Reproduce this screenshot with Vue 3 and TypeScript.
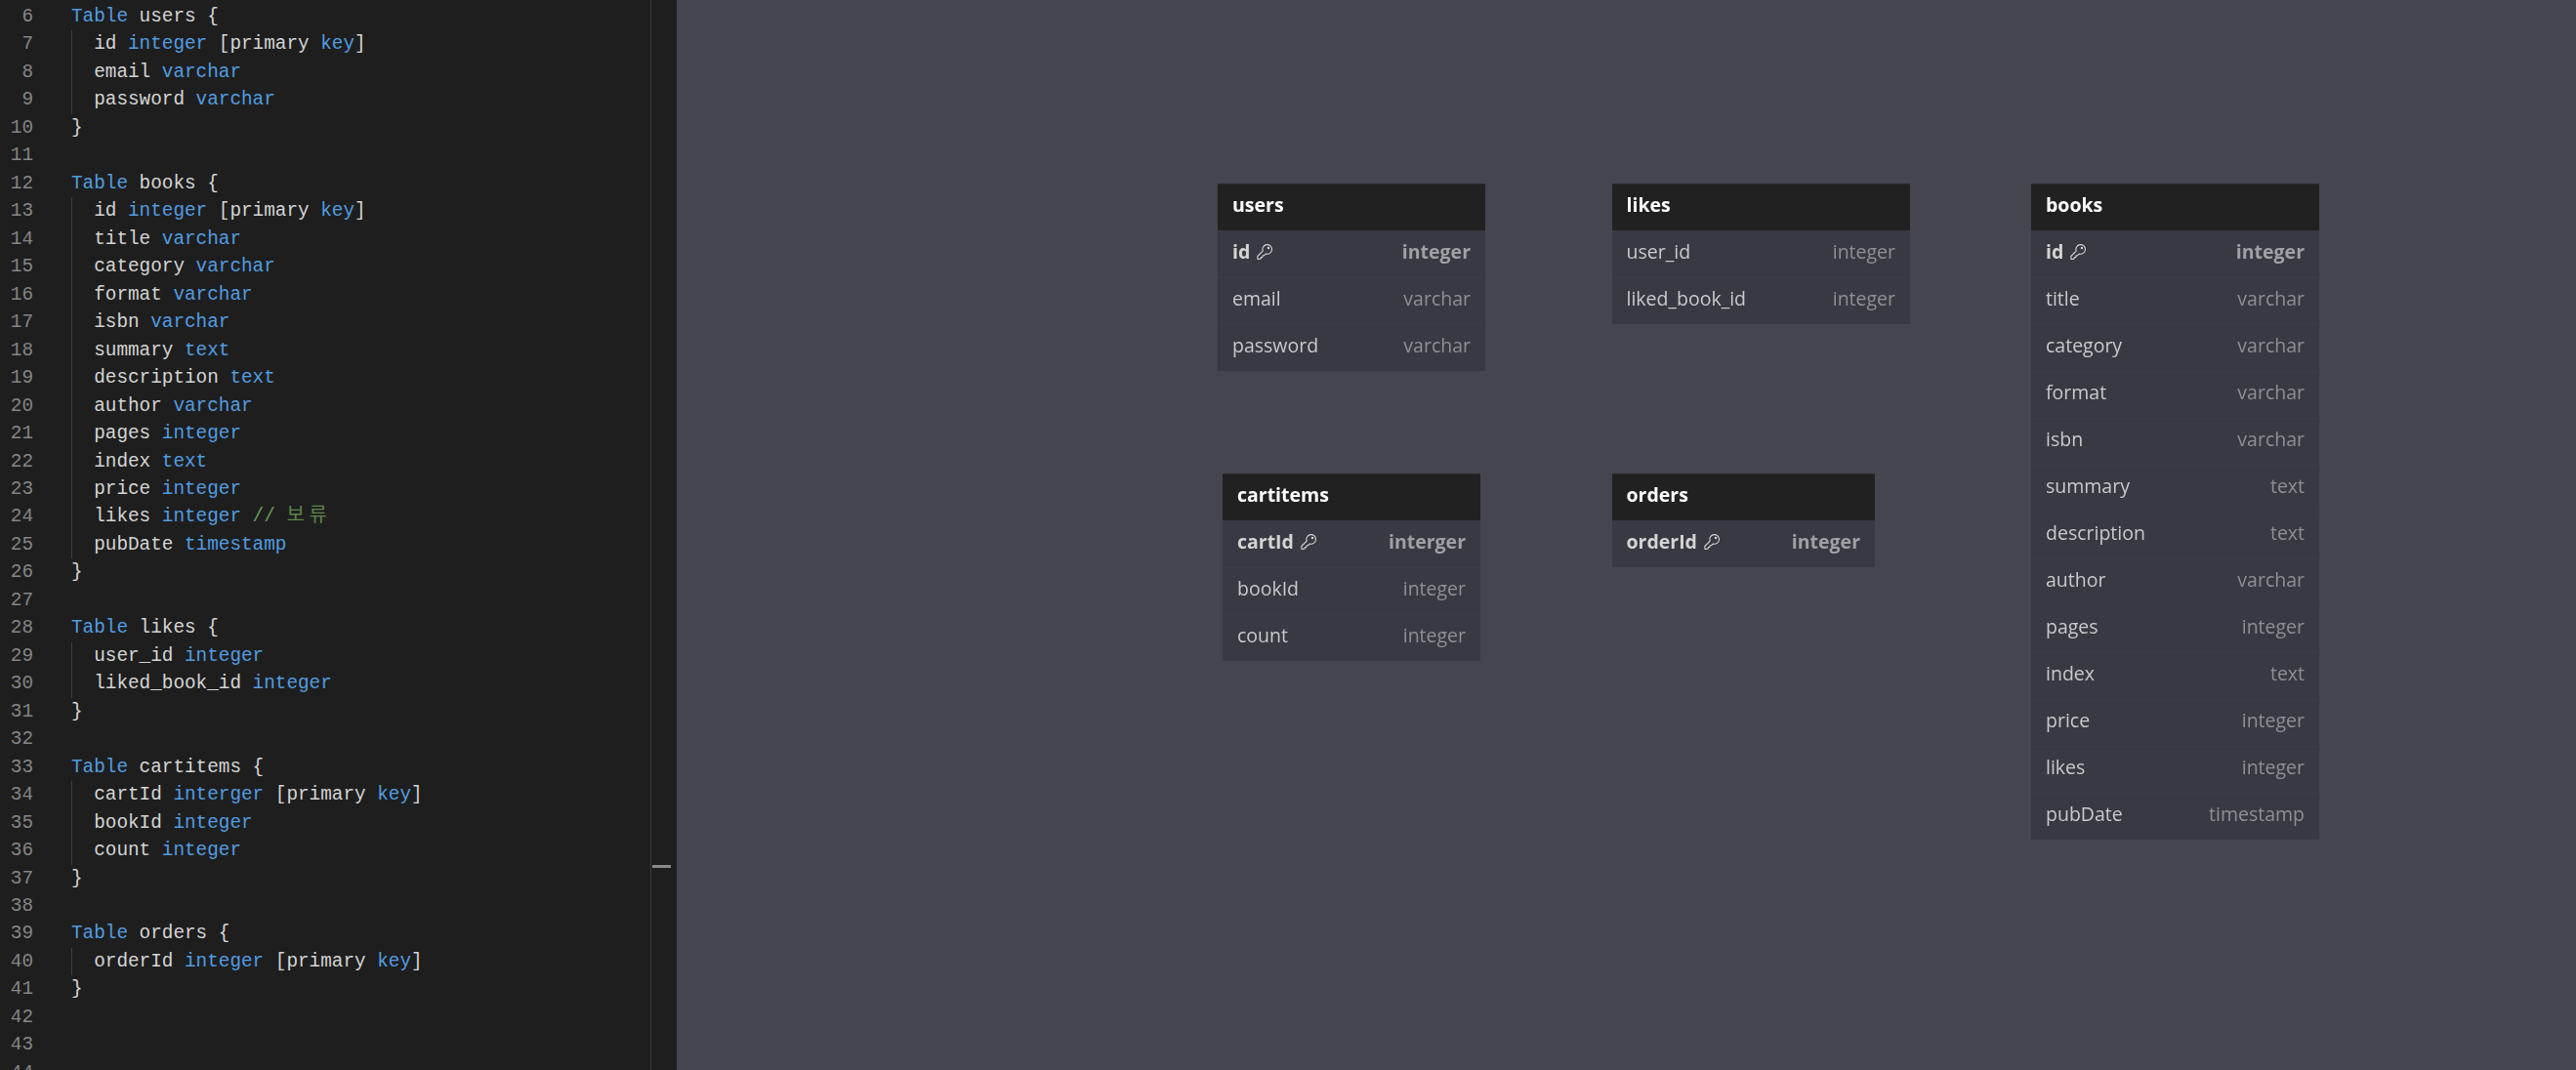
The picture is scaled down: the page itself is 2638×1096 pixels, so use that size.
<script setup lang="ts">
type Tok = { t: string; c?: string }
const T = (name: string): Tok[] => [{ t: 'Table', c: 'kw' }, { t: ` ${name} {` }]
const F = (n: string, ty: string, pk = false): Tok[] => {
  const out: Tok[] = [{ t: `  ${n} ` }, { t: ty, c: 'kw' }]
  if (pk) out.push({ t: ' [primary ' }, { t: 'key', c: 'kw' }, { t: ']' })
  return out
}
const E: Tok[] = [{ t: '}' }]
const B: Tok[] = []
const source: Tok[][] = [
  T('users'), F('id', 'integer', true), F('email', 'varchar'), F('password', 'varchar'), E, B,
  T('books'), F('id', 'integer', true), F('title', 'varchar'), F('category', 'varchar'), F('format', 'varchar'),
  F('isbn', 'varchar'), F('summary', 'text'), F('description', 'text'), F('author', 'varchar'), F('pages', 'integer'),
  F('index', 'text'), F('price', 'integer'),
  [...F('likes', 'integer'), { t: ' ' }, { t: '// ', c: 'cm' }, { t: '보류', c: 'cm ko' }],
  F('pubDate', 'timestamp'), E, B,
  T('likes'), F('user_id', 'integer'), F('liked_book_id', 'integer'), E, B,
  T('cartitems'), F('cartId', 'interger', true), F('bookId', 'integer'), F('count', 'integer'), E, B,
  T('orders'), F('orderId', 'integer', true), E, B, B, B
]
const lines = source.map((toks, i) => ({
  no: i + 6,
  toks,
  indented: toks.length > 0 && toks[0].t.startsWith('  ')
}))

type Row = { n: string; ty: string; pk?: boolean }
type Tbl = { name: string; x: number; y: number; w: number; rows: Row[] }
const r = (n: string, ty: string, pk = false): Row => ({ n, ty, pk })
const tables: Tbl[] = [
  { name: 'users', x: 1247, y: 188, w: 274, rows: [r('id', 'integer', true), r('email', 'varchar'), r('password', 'varchar')] },
  { name: 'likes', x: 1650.5, y: 188, w: 305.5, rows: [r('user_id', 'integer'), r('liked_book_id', 'integer')] },
  { name: 'books', x: 2080, y: 188, w: 295, rows: [
    r('id', 'integer', true), r('title', 'varchar'), r('category', 'varchar'), r('format', 'varchar'), r('isbn', 'varchar'),
    r('summary', 'text'), r('description', 'text'), r('author', 'varchar'), r('pages', 'integer'), r('index', 'text'),
    r('price', 'integer'), r('likes', 'integer'), r('pubDate', 'timestamp')
  ] },
  { name: 'cartitems', x: 1252, y: 485, w: 264, rows: [r('cartId', 'interger', true), r('bookId', 'integer'), r('count', 'integer')] },
  { name: 'orders', x: 1650.5, y: 485, w: 269.5, rows: [r('orderId', 'integer', true)] }
]
const boxStyle = (t: Tbl) => ({ left: `${t.x - 693}px`, top: `${t.y}px`, width: `${t.w}px` })
</script>

<template>
  <div class="page">
    <section class="editor">
      <div class="code">
        <div v-for="l in lines" :key="l.no" class="line">
          <span class="no">{{ l.no }}</span>
          <span class="txt" :class="{ guide: l.indented }"><span v-for="(k, j) in l.toks" :key="j" :class="k.c">{{ k.t }}</span></span>
        </div>
      </div>
      <div class="rail"><div class="tick"></div></div>
    </section>
    <section class="canvas">
      <div v-for="t in tables" :key="t.name" class="table" :style="boxStyle(t)">
        <div class="head"><span class="soft">{{ t.name }}</span></div>
        <div v-for="(row, i) in t.rows" :key="row.n" class="row" :class="{ pk: row.pk, sep: i > 0 }">
          <span class="name soft">{{ row.n }}<svg v-if="row.pk" class="key" viewBox="0 0 16 16" width="16" height="16" fill="none" stroke="#d4d4d4" stroke-width="1.1" stroke-linejoin="round"><path d="M6.2 7.1A4.8 4.8 0 1 1 9.3 10L7.6 11.7 6.1 11.9 5.9 13.4 4.4 13.6 4.1 15.2 1 15.4 .8 12.5z"/><circle cx="12" cy="3.9" r=".7"/></svg></span>
          <span class="type soft">{{ row.ty }}</span>
        </div>
      </div>
    </section>
  </div>
</template>

<style scoped>
.page {
  display: flex;
  width: 2638px;
  height: 1096px;
  overflow: hidden;
  background: #1e1e1e;
}
.editor {
  display: flex;
  flex: 0 0 693px;
  height: 1096px;
  overflow: hidden;
  background: #1e1e1e;
}
.code {
  flex: 0 0 666px;
  padding-top: 3px;
  font-family: "Liberation Mono", monospace;
  font-size: 19.33px;
  color: #d4d4d4;
}
.line {
  display: flex;
  height: 28.48px;
  line-height: 28.48px;
  white-space: pre;
}
.no {
  flex: 0 0 34px;
  text-align: right;
  color: #858585;
}
.txt {
  position: relative;
  margin-left: 39px;
  flex: 1;
}
.guide::before {
  content: "";
  position: absolute;
  left: 0;
  top: 0;
  bottom: 0;
  width: 1px;
  background: #404040;
}
.kw { color: #529ce0; }
.cm { color: #6a9955; }
.ko {
  color: #5c8649;
  font-family: "Noto Sans CJK KR", sans-serif;
  font-size: 20px;
  line-height: 1;
  letter-spacing: 4.6px;
}
.rail {
  flex: 1;
  border-left: 1px solid #3a3a3a;
  position: relative;
}
.tick {
  position: absolute;
  left: 1px;
  right: 6px;
  top: 886px;
  height: 3px;
  background: #8a8a8a;
}
.canvas {
  position: relative;
  flex: 1;
  background: #44454e;
}
.table {
  position: absolute;
  font-family: "Open Sans", sans-serif;
  font-size: 19.5px;
  background: #383942;
}
.head {
  height: 48px;
  line-height: 41px;
  padding-left: 15px;
  background: #212121;
  border-top: 1px solid #2b2b2e;
  box-sizing: border-box;
  color: #fff;
  font-weight: 700;
}
.row {
  display: flex;
  justify-content: space-between;
  align-items: center;
  box-sizing: border-box;
  height: 48px;
  padding: 0 15px 6px 15px;
  color: #c9cacc;
}
.sep { box-shadow: inset 0 1px 0 #3b3c44; }
.soft { filter: blur(0.35px); }
.name { display: flex; align-items: center; gap: 7px; }
.key { margin-top: 1px; }
.type { color: #8f9095; }
.pk .name, .pk .type { font-weight: 700; }
.pk .name { color: #d4d4d4; }
.pk .type { color: #a0a1a5; }
</style>
